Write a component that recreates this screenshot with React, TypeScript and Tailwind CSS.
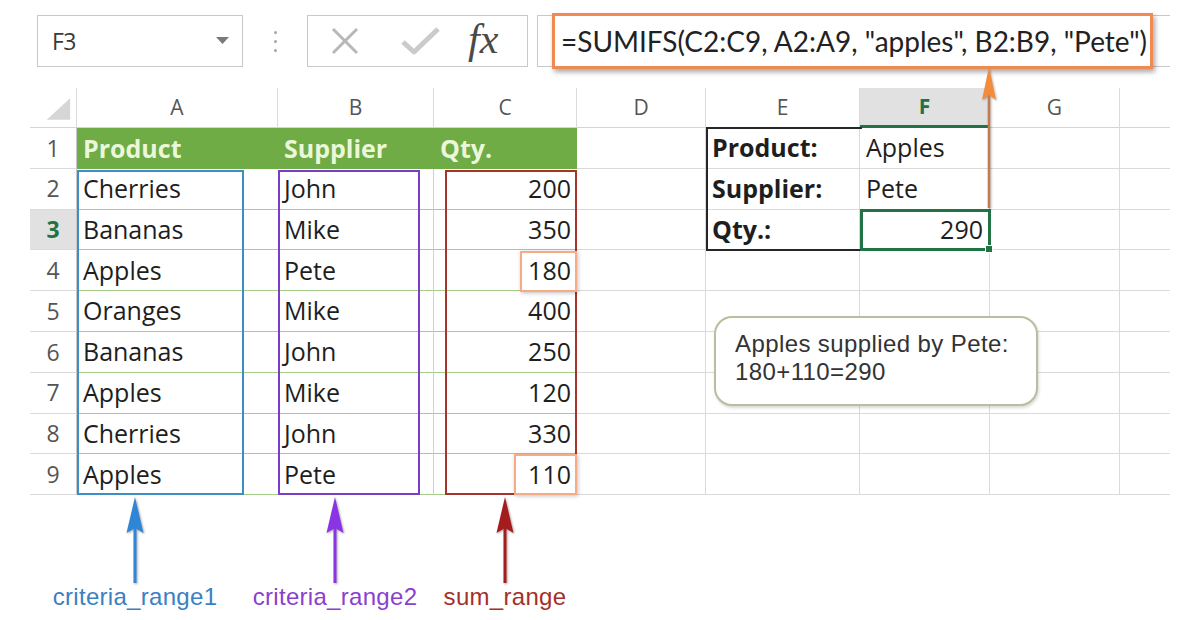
import React from 'react';

const colWidths = [
  'w-[47px]',
  'w-[201px]',
  'w-[156px]',
  'w-[143px]',
  'w-[129px]',
  'w-[154px]',
  'w-[130px]',
  'w-[130px]',
  'w-[50px]',
];
const letters = ['', 'A', 'B', 'C', 'D', 'E', 'F', 'G', ''];

const data = [
  ['Product', 'Supplier', 'Qty.'],
  ['Cherries', 'John', '200'],
  ['Bananas', 'Mike', '350'],
  ['Apples', 'Pete', '180'],
  ['Oranges', 'Mike', '400'],
  ['Bananas', 'John', '250'],
  ['Apples', 'Mike', '120'],
  ['Cherries', 'John', '330'],
  ['Apples', 'Pete', '110'],
];

const summary: Record<number, [string, string]> = {
  1: ['Product:', 'Apples'],
  2: ['Supplier:', 'Pete'],
  3: ['Qty.:', '290'],
};

const cellFont = "font-['Open_Sans',sans-serif]";

const Corner = () => (
  <svg width="47" height="40" viewBox="0 0 47 40">
    <polygon points="41,10 41,32 17,32" fill="#d6d6d6" />
  </svg>
);

const Arrow = ({ color }: { color: string }) => (
  <svg width="24" height="86" viewBox="0 0 24 86" className="drop-shadow-[1px_1px_1px_rgba(0,0,0,0.35)]">
    <line x1="12" y1="30" x2="12" y2="86" stroke={color} strokeWidth="3" />
    <polygon points="12,0 3.5,36 12,31 20.5,36" fill={color} />
  </svg>
);

const FormulaBar = () => (
  <div className="flex h-[52px] mt-[15px] items-stretch">
    {/* name box */}
    <div className="ml-[37px] w-[206px] border border-[#c9c9c9] flex items-center justify-between pl-[14px] pr-[13px]">
      <span className="font-['Open_Sans',sans-serif] text-[23px] text-[#3a3a3a] tracking-[-0.5px]">F3</span>
      <svg width="13" height="8" viewBox="0 0 13 8">
        <polygon points="0,0 13,0 6.5,7" fill="#7a7a7a" />
      </svg>
    </div>
    <div className="w-[64px] flex flex-col items-center justify-center gap-[6px]">
      <span className="w-[3px] h-[3px] rounded-full bg-[#a5a5a5]" />
      <span className="w-[3px] h-[3px] rounded-full bg-[#a5a5a5]" />
      <span className="w-[3px] h-[3px] rounded-full bg-[#a5a5a5]" />
    </div>
    {/* cancel / enter / fx */}
    <div className="w-[221px] border border-[#c9c9c9] flex items-center">
      <svg width="30" height="30" viewBox="0 0 30 30" className="ml-[22px]">
        <line x1="3" y1="3" x2="27" y2="27" stroke="#b8b8b8" strokeWidth="3" />
        <line x1="27" y1="3" x2="3" y2="27" stroke="#b8b8b8" strokeWidth="3" />
      </svg>
      <svg width="42" height="30" viewBox="0 0 42 30" className="ml-[40px]">
        <polyline points="3,16 14,26 38,3" fill="none" stroke="#cbcbcb" strokeWidth="5" strokeLinejoin="round" />
      </svg>
      <span className="ml-[26px] font-['Liberation_Serif',serif] italic text-[42px] leading-none text-[#4a4a4a] -mt-[4px]">fx</span>
    </div>
    {/* formula input */}
    <div className="relative ml-[9px] w-[633px] border-t border-b border-l border-[#c9c9c9]">
      <div className="absolute left-[14px] -top-[3px] w-[601px] h-[56px] border-[3px] border-[#ee8a52] bg-white shadow-[2px_3px_5px_rgba(0,0,0,0.35)] flex items-center pl-[6px]">
        <span className="font-['Lato',sans-serif] text-[28px] text-[#222] whitespace-nowrap">
          =SUMIFS(C2:C9, A2:A9, "apples", B2:B9, "Pete")
        </span>
      </div>
    </div>
  </div>
);

const HeaderRow = () => (
  <div className="flex h-[40px]">
    {letters.map((l, c) => (
      <div
        key={c}
        className={`${colWidths[c]} flex items-center justify-center ${cellFont} text-[21px] ${
          c === 6
            ? 'bg-[#e1e1e1] border-b-[3px] border-b-[#217346] text-[#217346] font-bold'
            : 'border-b border-b-[#d4d4d4] text-[#555]'
        } ${c < 8 ? 'border-r border-r-[#dadada]' : ''}`}
      >
        {c === 0 ? <Corner /> : l}
      </div>
    ))}
  </div>
);

const Row = ({ r }: { r: number }) => {
  const vals = data[r - 1];
  const sum = summary[r];
  return (
    <div className={`flex h-[40.8px] ${cellFont} text-[25px] text-[#1e1e1e]`}>
      {colWidths.map((w, c) => {
        if (c === 0) {
          return (
            <div
              key={c}
              className={`${w} flex items-center justify-center border-r border-r-[#c8c8c8] border-b border-b-[#dadada] text-[23px] ${
                r === 3 ? 'bg-[#e1e1e1] text-[#217346] font-bold' : 'text-[#555]'
              }`}
            >
              {r}
            </div>
          );
        }
        if (c <= 3) {
          const v = vals[c - 1];
          if (r === 1) {
            return (
              <div key={c} className={`${w} flex items-center px-[6px] bg-[#6fac46] text-[#ecf7da] font-bold`}>
                {v}
              </div>
            );
          }
          return (
            <div
              key={c}
              className={`${w} flex items-center px-[6px] border-b border-b-[#a6ce8b] ${
                c === 2 ? 'border-r border-r-[#d0d0d0]' : ''
              } ${c === 3 ? 'justify-end' : ''}`}
            >
              {v}
            </div>
          );
        }
        let content: React.ReactNode = null;
        if (sum && c === 5) content = <span className="font-bold">{sum[0]}</span>;
        if (sum && c === 6) content = sum[1];
        return (
          <div
            key={c}
            className={`${w} flex items-center px-[6px] border-b border-b-[#dadada] ${
              c < 8 ? 'border-r border-r-[#dadada]' : ''
            } ${c === 6 && r === 3 ? 'justify-end' : ''}`}
          >
            {content}
          </div>
        );
      })}
    </div>
  );
};

export default function App() {
  return (
    <div className="relative w-[1200px] h-[620px] bg-white overflow-hidden">
      <FormulaBar />

      {/* sheet */}
      <div className="relative ml-[30px] mt-[21px] w-[1140px]">
        <HeaderRow />
        {data.map((_, i) => (
          <Row key={i} r={i + 1} />
        ))}

        {/* range outlines */}
        <div className="absolute left-[47px] top-[82px] w-[167px] h-[325px] border-2 border-[#3d8dc6]" />
        <div className="absolute left-[248px] top-[82px] w-[142px] h-[325px] border-2 border-[#7a3dc8]" />
        <div className="absolute left-[415px] top-[82px] w-[132px] h-[325px] border-2 border-[#a5352a]" />
        <div className="absolute left-[490px] top-[163px] w-[57px] h-[41px] border-2 border-[#f5ab86] shadow-[1px_1px_4px_rgba(0,0,0,0.25)]" />
        <div className="absolute left-[484px] top-[366px] w-[63px] h-[41px] border-2 border-[#f5ab86] shadow-[1px_1px_4px_rgba(0,0,0,0.25)]" />

        {/* summary block */}
        <div className="absolute left-[676px] top-[39px] w-[156px] h-[124px] border-l-2 border-t-2 border-b-2 border-[#262626]" />
        <div className="absolute left-[830px] top-[121px] w-[131px] h-[42px] border-[3px] border-[#217346]" />
        <div className="absolute left-[955px] top-[157px] w-[8px] h-[8px] bg-[#217346] border border-white" />

        {/* callout */}
        <div className="absolute left-[684px] top-[228px] w-[324px] h-[90px] rounded-[18px] border-2 border-[#bcbc9e] bg-white shadow-[1px_2px_3px_rgba(0,0,0,0.15)] pl-[19px] pt-[12px] font-['Liberation_Sans',Arial,sans-serif] text-[24px] leading-[28px] text-[#333] tracking-[0.4px]">
          <div>Apples supplied by Pete:</div>
          <div>180+110=290</div>
        </div>
      </div>

      {/* formula pointer */}
      <svg width="20" height="142" viewBox="0 0 20 142" className="absolute left-[979px] top-[66px] drop-shadow-[1px_1px_1px_rgba(0,0,0,0.3)]">
        <line x1="10" y1="28" x2="10" y2="142" stroke="#c27a50" strokeWidth="2.5" />
        <polygon points="10,1 3,34 10,29 17,34" fill="#f28b3c" />
      </svg>

      {/* annotations */}
      <div className="flex ml-[35px] mt-[2px] font-['Liberation_Sans',Arial,sans-serif] text-[24px] tracking-[0.3px]">
        <div className="w-[200px] flex flex-col items-center">
          <Arrow color="#2f86d6" />
          <span className="-mt-[4px] text-[#3a80c2]">criteria_range1</span>
        </div>
        <div className="w-[200px] flex flex-col items-center">
          <Arrow color="#8b34e6" />
          <span className="-mt-[4px] text-[#8a3fd0]">criteria_range2</span>
        </div>
        <div className="w-[140px] flex flex-col items-center">
          <Arrow color="#a41c1c" />
          <span className="-mt-[4px] text-[#a3302a]">sum_range</span>
        </div>
      </div>
    </div>
  );
}
